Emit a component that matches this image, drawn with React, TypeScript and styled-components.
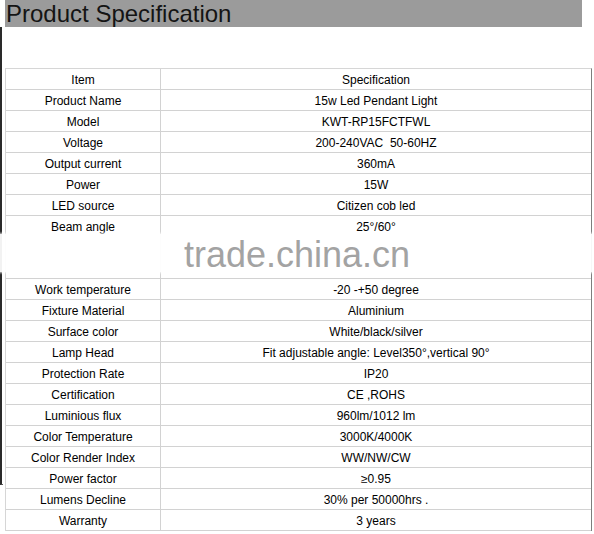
import React from "react";
import styled, { createGlobalStyle } from "styled-components";

const GlobalStyle = createGlobalStyle`
  html, body {
    margin: 0;
    padding: 0;
    background: #ffffff;
  }
  body {
    font-family: "Liberation Sans", Arial, sans-serif;
    color: #000000;
  }
`;

const Page = styled.div`
  position: relative;
  width: 594px;
  height: 534px;
  overflow: hidden;
  background: #ffffff;
`;

const TitleBar = styled.div`
  margin-left: 5px;
  width: 577px;
  height: 27px;
  background: #9b9b9b;
  font-size: 24px;
  line-height: 28px;
  color: #141414;
  padding-left: 1px;
  box-sizing: border-box;
`;

const SideRule = styled.div`
  position: absolute;
  left: 0;
  top: 27px;
  width: 3px;
  height: 458px;
  border-left: 2px solid #2a2a2a;
  border-bottom: 1px solid #555555;
  box-sizing: border-box;
`;

const Table = styled.div`
  margin: 41px 0 0 5px;
  width: 587px;
  box-sizing: border-box;
  border-top: 1px solid #d6d6d6;
  border-left: 1px solid #d6d6d6;
  border-right: 1px solid #7e7e7e;
`;

const Row = styled.div<{ $tall?: boolean }>`
  display: grid;
  grid-template-columns: 155px 1fr;
  height: ${(p) => (p.$tall ? 63 : 21)}px;
  box-sizing: border-box;
  border-bottom: 1px solid #d2d2d2;
`;

const Cell = styled.div<{ $tall?: boolean; $first?: boolean }>`
  display: flex;
  justify-content: center;
  align-items: ${(p) => (p.$tall ? "flex-start" : "center")};
  padding-top: ${(p) => (p.$tall ? 4 : 2)}px;
  box-sizing: border-box;
  font-size: 12px;
  line-height: 14px;
  white-space: pre;
  border-right: ${(p) => (p.$first ? "1px solid #d2d2d2" : "none")};
`;

const Watermark = styled.div`
  position: absolute;
  left: 0;
  right: 0;
  top: 234px;
  height: 38px;
  background: rgba(255, 255, 255, 0.94);
  box-shadow: 0 0 2px 1px rgba(255, 255, 255, 0.8);
  display: flex;
  justify-content: center;
  align-items: center;
  padding-top: 4px;
  box-sizing: border-box;
  font-size: 36px;
  line-height: 36px;
  color: #a3a3a3;
`;

const rows: [string, string][] = [
  ["Item", "Specification"],
  ["Product Name", "15w Led Pendant Light"],
  ["Model", "KWT-RP15FCTFWL"],
  ["Voltage", "200-240VAC  50-60HZ"],
  ["Output current", "360mA"],
  ["Power", "15W"],
  ["LED source", "Citizen cob led"],
  ["Beam angle", "25°/60°"],
  ["Work temperature", "-20 -+50 degree"],
  ["Fixture Material", "Aluminium"],
  ["Surface color", "White/black/silver"],
  ["Lamp Head", "Fit adjustable angle: Level350°,vertical 90°"],
  ["Protection Rate", "IP20"],
  ["Certification", "CE ,ROHS"],
  ["Luminious flux", "960lm/1012 lm"],
  ["Color Temperature", "3000K/4000K"],
  ["Color Render Index", "WW/NW/CW"],
  ["Power factor", "≥0.95"],
  ["Lumens Decline", "30% per 50000hrs ."],
  ["Warranty", "3 years"],
];

export default function App() {
  return (
    <Page>
      <GlobalStyle />
      <TitleBar>Product Specification</TitleBar>
      <SideRule />
      <Table>
        {rows.map(([item, spec]) => {
          const tall = item === "Beam angle";
          return (
            <Row key={item} $tall={tall}>
              <Cell $first $tall={tall}>
                {item}
              </Cell>
              <Cell $tall={tall}>{spec}</Cell>
            </Row>
          );
        })}
      </Table>
      <Watermark>trade.china.cn</Watermark>
    </Page>
  );
}
